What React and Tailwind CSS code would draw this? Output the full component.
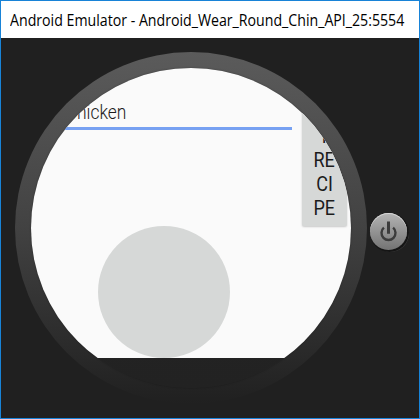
function TitleBar() {
  return (
    <header className="flex h-[37px] shrink-0 items-center bg-white pl-[9px]">
      <h1 className="w-[408px] origin-left scale-x-[0.885] whitespace-nowrap font-['Open_Sans','Noto_Sans',sans-serif] text-[16px] leading-5 text-black">
        Android Emulator - Android_Wear_Round_Chin_API_25:5554
      </h1>
    </header>
  );
}

function WatchScreen() {
  return (
    <div className="h-[290px] w-[320px] overflow-hidden">
      <div className="h-[320px] w-[320px] overflow-hidden rounded-full bg-[#fafafa]">
        <div className="flex h-[158px] justify-between pr-1">
          <div className="ml-4 mt-[32px] h-[30px] w-[245px] border-b-[3px] border-[#77a1f2]">
            <span className="block origin-left scale-x-[0.83] pl-[22.5px] font-[Roboto,sans-serif] text-[21px] font-light leading-6 text-[#1c1c1c]">
              Chicken
            </span>
          </div>
          <button className="flex w-[45px] flex-col items-center justify-end rounded-[2px] bg-[#d6d8d7] pb-1.5 font-[Roboto,sans-serif] text-[20.5px] leading-6 text-[#1c1c1c] shadow-[0_1px_2px_rgba(0,0,0,0.2)]">
            {["GE", "T", "RE", "CI", "PE"].map((line) => (
              <span key={line} className="scale-x-[0.88]">{line}</span>
            ))}
          </button>
        </div>
        <div className="ml-[67px] h-[132px] w-[132px] rounded-full bg-[#d6d8d7]" />
      </div>
    </div>
  );
}

function PowerButton() {
  return (
    <button className="mt-[161px] ml-[3px] flex h-[37px] w-[37px] shrink-0 items-center justify-center rounded-full bg-linear-to-b from-[#b4b4b4] to-[#747474] shadow-[1px_1px_0_1px_#151515,2px_2px_0_0px_#484848,inset_0_1px_0_#d5d5d5]">
      <svg viewBox="0 0 20 22" className="h-[22px] w-5 -translate-x-[0.5px]" fill="none" stroke="#3c3c3c" aria-label="Power">
        <path d="M5.4 6.7a7 7 0 1 0 9.2 0" strokeWidth="2.4" />
        <path d="M10 0.5v12.2" strokeWidth="3" />
      </svg>
    </button>
  );
}

export default function App() {
  return (
    <div className="flex h-[419px] w-[420px] flex-col overflow-hidden border border-[#1883d7] bg-[#202020]">
      <TitleBar />
      <main className="flex flex-1 items-start pl-[14px] pt-[14px]">
        <div className="h-[352px] w-[352px] shrink-0 rounded-full bg-linear-to-b from-[#5b5b5b] from-0% via-[#424242] via-50% to-[#202020] to-100% p-4">
          <div className="h-[320px] w-[320px] rounded-full bg-linear-to-b from-[#262626] to-[#222] shadow-[0_0_2px_rgba(0,0,0,0.35)]">
            <WatchScreen />
          </div>
        </div>
        <PowerButton />
      </main>
    </div>
  );
}
